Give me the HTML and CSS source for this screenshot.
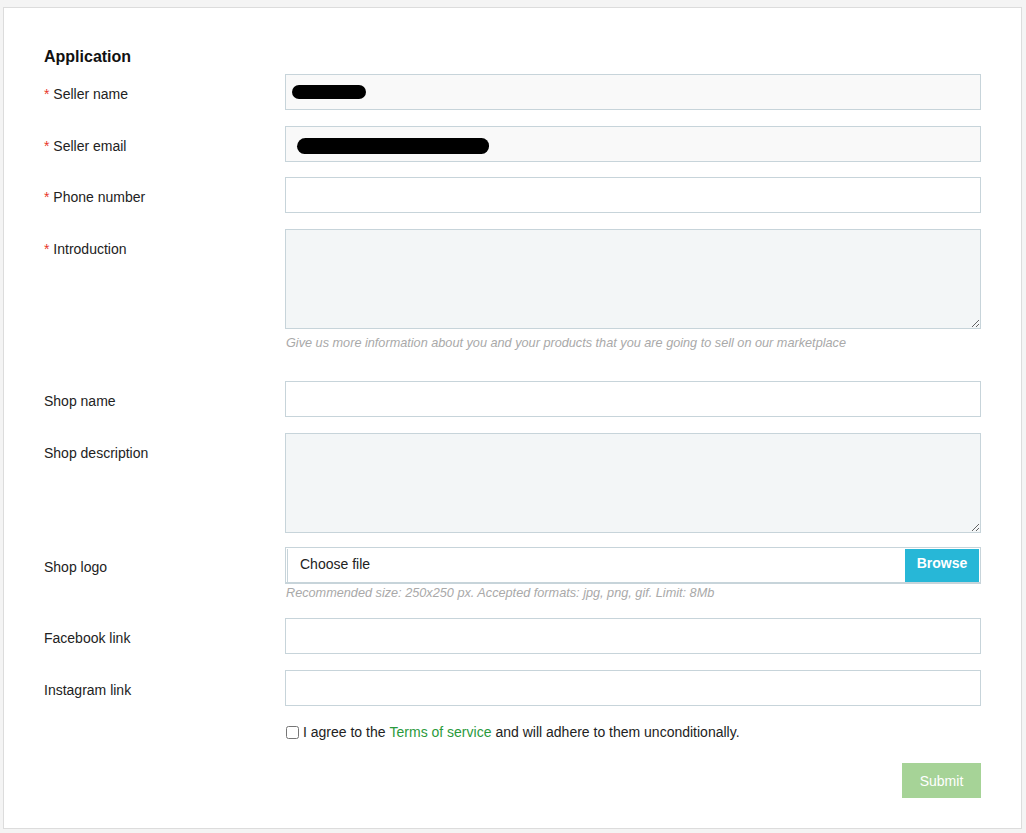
FILE: index.html
```html
<!DOCTYPE html>
<html>
<head>
<meta charset="utf-8">
<link rel="stylesheet" href="styles.css">
</head>
<body>
<div class="card">
  <h2 class="title">Application</h2>
  <form class="form">
    <div class="row row-first">
      <label class="label"><span class="req">*</span> Seller name</label>
      <div class="field"><div class="input input-disabled"><span class="redact redact-name"></span></div></div>
    </div>
    <div class="row row-email">
      <label class="label"><span class="req">*</span> Seller email</label>
      <div class="field"><div class="input input-disabled"><span class="redact redact-email"></span></div></div>
    </div>
    <div class="row">
      <label class="label"><span class="req">*</span> Phone number</label>
      <div class="field"><input class="input" type="text"></div>
    </div>
    <div class="row row-intro">
      <label class="label"><span class="req">*</span> Introduction</label>
      <div class="field">
        <textarea class="input textarea"></textarea>
        <div class="help">Give us more information about you and your products that you are going to sell on our marketplace</div>
      </div>
    </div>
    <div class="row">
      <label class="label">Shop name</label>
      <div class="field"><input class="input" type="text"></div>
    </div>
    <div class="row row-tight">
      <label class="label">Shop description</label>
      <div class="field"><textarea class="input textarea"></textarea></div>
    </div>
    <div class="row">
      <label class="label">Shop logo</label>
      <div class="field">
        <div class="file">
          <div class="file-inner">
            <span class="file-text">Choose file</span>
            <span class="browse">Browse</span>
          </div>
        </div>
        <div class="help help-file">Recommended size: 250x250 px. Accepted formats: jpg, png, gif. Limit: 8Mb</div>
      </div>
    </div>
    <div class="row">
      <label class="label">Facebook link</label>
      <div class="field"><input class="input" type="text"></div>
    </div>
    <div class="row">
      <label class="label">Instagram link</label>
      <div class="field"><input class="input" type="text"></div>
    </div>
    <div class="row row-check">
      <div class="label-spacer"></div>
      <label class="agree"><input type="checkbox" class="check"> I agree to the <a class="terms">Terms of service</a> and will adhere to them unconditionally.</label>
    </div>
    <div class="actions">
      <button type="button" class="submit">Submit</button>
    </div>
  </form>
</div>
</body>
</html>
```

FILE: styles.css
```css
html, body {
  margin: 0;
  padding: 0;
  background: #f4f4f4;
}
body {
  padding: 7px 4px 3px 3px;
  font-family: "Liberation Sans", Arial, sans-serif;
  font-size: 14px;
  color: #222;
}
.card {
  background: #fff;
  border: 1px solid #dcdcdc;
  padding: 39px 39px 30px 40px;
  height: 822px;
  box-sizing: border-box;
}
.title {
  margin: 0 0 7px 0;
  font-size: 16px;
  line-height: 20px;
  font-weight: bold;
  color: #111;
}
.form {
  margin: 0;
}
.row {
  display: grid;
  grid-template-columns: 241px 696px;
  margin-bottom: 16px;
}
.row-email {
  margin-bottom: 15px;
}
.row-intro {
  margin-bottom: 29px;
}
.row-tight {
  margin-bottom: 14px;
}
.row-check {
  margin-bottom: 21px;
}
.label {
  padding-top: 10px;
  line-height: 20px;
  color: #222;
}
.req {
  color: #e8372a;
}
.field {
  display: flex;
  flex-direction: column;
}
.input {
  display: block;
  box-sizing: border-box;
  width: 696px;
  height: 36px;
  margin: 0;
  border: 1px solid #c7d4da;
  background: #fff;
  font-family: inherit;
  font-size: 14px;
  padding: 0 12px;
  outline: none;
}
.input-disabled {
  background: #f9f9f9;
}
.redact {
  display: block;
  background: #000;
  border-radius: 8px;
}
.redact-name {
  width: 74px;
  height: 14px;
  margin: 10px 0 0 -6px;
}
.redact-email {
  width: 192px;
  height: 16px;
  margin: 11px 0 0 -1px;
  border-radius: 9px 8px 8px 8px;
}
.textarea {
  height: 100px;
  background: #f3f6f7;
  resize: vertical;
  padding: 8px 12px;
}
.help {
  margin-top: 6px;
  font-size: 12.7px;
  line-height: 17px;
  font-style: italic;
  color: #a9a9a9;
  padding-left: 1px;
}
.help-file {
  margin-top: 1px;
}
.file {
  box-sizing: border-box;
  height: 37px;
  border: 1px solid #c7d4da;
  border-bottom-width: 2px;
  padding: 1px 1px 0 1px;
}
.file-inner {
  display: flex;
  align-items: stretch;
  height: 33px;
  border-left: 1px solid #c7d4da;
}
.file-text {
  flex: 1;
  line-height: 31px;
  padding-left: 12px;
  color: #222;
}
.browse {
  width: 74px;
  background: #27b7d7;
  color: #fff;
  font-weight: bold;
  text-align: center;
  line-height: 29px;
}
.label-spacer {
  height: 1px;
}
.agree {
  display: flex;
  align-items: center;
  line-height: 20px;
  color: #222;
  white-space: nowrap;
}
.check {
  width: 13px;
  height: 13px;
  margin: 0 4px 0 1px;
}
.terms {
  color: #2a9a3c;
  text-decoration: none;
  margin: 0 4px;
}
.actions {
  display: flex;
  justify-content: flex-end;
  padding-right: 1px;
}
.submit {
  width: 79px;
  height: 35px;
  border: none;
  background: #a6d397;
  color: #fff;
  font-family: inherit;
  font-size: 14px;
  padding: 0;
}
```
